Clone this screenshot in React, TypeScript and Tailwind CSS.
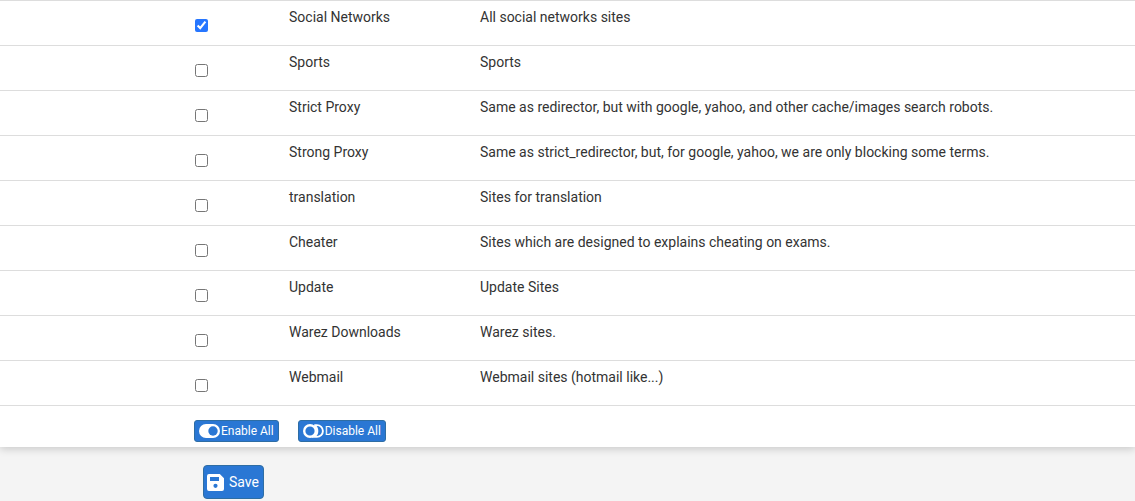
import { useState } from "react";

type Category = { id: string; name: string; description: string };

const categories: Category[] = [
  { id: "social", name: "Social Networks", description: "All social networks sites" },
  { id: "sports", name: "Sports", description: "Sports" },
  {
    id: "strict",
    name: "Strict Proxy",
    description: "Same as redirector, but with google, yahoo, and other cache/images search robots.",
  },
  {
    id: "strong",
    name: "Strong Proxy",
    description: "Same as strict_redirector, but, for google, yahoo, we are only blocking some terms.",
  },
  { id: "translation", name: "translation", description: "Sites for translation" },
  { id: "cheater", name: "Cheater", description: "Sites which are designed to explains cheating on exams." },
  { id: "update", name: "Update", description: "Update Sites" },
  { id: "warez", name: "Warez Downloads", description: "Warez sites." },
  { id: "webmail", name: "Webmail", description: "Webmail sites (hotmail like...)" },
];

function ToggleOnIcon() {
  return (
    <svg width="21" height="14" viewBox="0 0 21 14" aria-hidden="true">
      <rect width="21" height="14" rx="7" fill="#fff" />
      <circle cx="14" cy="7" r="4.7" fill="#2a77d4" />
    </svg>
  );
}

function ToggleOffIcon() {
  return (
    <svg width="21" height="14" viewBox="0 0 21 14" fill="none" stroke="#fff" aria-hidden="true">
      <circle cx="7" cy="7" r="5.8" strokeWidth="2.4" />
      <path d="M11.3 1.1H14a5.9 5.9 0 0 1 0 11.8h-2.7A7.2 7.2 0 0 0 11.3 1.1" strokeWidth="1.9" />
    </svg>
  );
}

function SaveIcon() {
  return (
    <svg width="17" height="17" viewBox="0 0 17 17" aria-hidden="true">
      <path
        fill="#fff"
        fillRule="evenodd"
        d="M2 0h10.8L17 4.2V15a2 2 0 0 1-2 2H2a2 2 0 0 1-2-2V2a2 2 0 0 1 2-2Zm1 3v4h9V3H3Zm5.5 6.7a2.1 2.1 0 1 0 0 4.2 2.1 2.1 0 0 0 0-4.2Z"
      />
    </svg>
  );
}

const smallButton =
  "flex h-[22px] items-center gap-px rounded-[3px] border border-[#2e6da4] bg-[#2a77d4] px-1 text-xs text-white";

export default function App() {
  const [enabled, setEnabled] = useState<string[]>(["social"]);

  const toggle = (id: string) =>
    setEnabled((current) => (current.includes(id) ? current.filter((item) => item !== id) : [...current, id]));

  return (
    <div className="min-h-screen bg-[#f4f4f4] font-['Roboto',sans-serif] text-sm text-[#333]">
      <div className="bg-white shadow-[0_2px_8px_rgba(0,0,0,0.18)]">
        <table className="w-full table-fixed border-collapse">
          <colgroup>
            <col className="w-[187px]" />
            <col className="w-[94px]" />
            <col className="w-[191px]" />
            <col />
          </colgroup>
          <tbody>
            {categories.map((category) => (
              <tr key={category.id} className="h-[45px] border-y border-[#ddd] align-top">
                <td />
                <td className="px-2 pt-[18px]">
                  <input
                    id={category.id}
                    type="checkbox"
                    className="block size-[13px] accent-[#2676ff]"
                    checked={enabled.includes(category.id)}
                    onChange={() => toggle(category.id)}
                  />
                </td>
                <td className="px-2 pt-[6px]">
                  <label htmlFor={category.id}>{category.name}</label>
                </td>
                <td className="px-2 pt-[6px]">{category.description}</td>
              </tr>
            ))}
          </tbody>
        </table>
        <div className="flex gap-[19px] pt-[14px] pb-[5px] pl-[194px]">
          <button type="button" className={smallButton} onClick={() => setEnabled(categories.map((c) => c.id))}>
            <ToggleOnIcon />
            Enable All
          </button>
          <button type="button" className={smallButton} onClick={() => setEnabled([])}>
            <ToggleOffIcon />
            Disable All
          </button>
        </div>
      </div>
      <div className="pt-[18px] pl-[203px]">
        <button
          type="button"
          className="flex h-[34px] items-center gap-[5px] rounded border border-[#2e6da4] bg-[#2a77d4] pr-1 pl-[3px] text-sm text-white"
        >
          <SaveIcon />
          Save
        </button>
      </div>
    </div>
  );
}
